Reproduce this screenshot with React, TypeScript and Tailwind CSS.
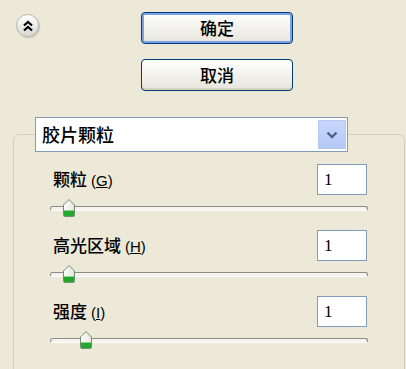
import React from "react";

const cjk = { fontFamily: '"Noto Sans CJK SC", "Noto Sans", sans-serif' };

function Thumb() {
  return (
    <svg width="12" height="18" viewBox="0 0 12 18" className="absolute top-[-9px]" style={{ left: -6 }}>
      <defs>
        <linearGradient id="tb" x1="0" y1="0" x2="1" y2="0">
          <stop offset="0" stopColor="#ffffff" />
          <stop offset="1" stopColor="#e4e4dc" />
        </linearGradient>
      </defs>
      <path d="M6 0.5 L11.5 6 L11.5 16.5 Q11.5 17.5 10.5 17.5 L1.5 17.5 Q0.5 17.5 0.5 16.5 L0.5 6 Z" fill="url(#tb)" stroke="#6f8f74" />
      <rect x="1" y="12" width="10" height="5" fill="#21a82d" />
      <rect x="1" y="11" width="10" height="1" fill="#8ad48f" />
    </svg>
  );
}

function Slider({ pos }: { pos: number }) {
  return (
    <div className="h-[26px] flex items-center pl-[36px] pr-[36px]">
      <div className="relative w-full h-[5px] rounded-[3px] bg-[#f4f3ee] border border-[#8c8c86] border-b-white">
        <div className="absolute top-[1px]" style={{ left: pos }}>
          <Thumb />
        </div>
      </div>
    </div>
  );
}

function Row({ label, hot, pos }: { label: string; hot: string; pos: number }) {
  return (
    <div className="mb-[9px]">
      <div className="h-[31px] flex items-center justify-between pl-[39px] pr-[37px]">
        <span className="text-[17px] font-medium text-black" style={cjk}>
          {label}
          <span className="ml-[4px] text-[15px]" style={{ fontFamily: '"Liberation Sans", sans-serif' }}>
            (<span className="underline">{hot}</span>)
          </span>
        </span>
        <div className="w-[50px] h-[31px] bg-white border border-[#7f9db9] flex items-center pl-[6px] text-[17px]" style={{ fontFamily: '"Liberation Serif", serif' }}>
          1
        </div>
      </div>
      <Slider pos={pos} />
    </div>
  );
}

export default function App() {
  return (
    <div className="w-[406px] h-[369px] bg-[#ece9d8] overflow-hidden" style={cjk}>
      <div className="flex pt-[12px]">
        <div className="ml-[16px] mt-[2px] w-[23px] h-[23px] rounded-full bg-gradient-to-b from-white to-[#d9d9d2] border border-[#b5b5ab] shadow-[1px_1px_1px_rgba(0,0,0,0.18)] flex items-center justify-center">
          <svg width="12" height="12" viewBox="0 0 12 12">
            <path d="M2 5.5 L6 2 L10 5.5 M2 10.5 L6 7 L10 10.5" fill="none" stroke="#000" strokeWidth="2.2" />
          </svg>
        </div>
        <div className="ml-[102px] flex flex-col gap-[15px]">
          <button className="w-[152px] h-[32px] rounded-[4px] border border-[#003c74] bg-gradient-to-b from-white to-[#e6e5dc] shadow-[inset_0_0_0_2px_#7ba2e7] text-[17px] font-medium text-black" style={cjk}>
            确定
          </button>
          <button className="w-[152px] h-[32px] rounded-[4px] border border-[#003c74] bg-gradient-to-b from-white to-[#e6e5dc] shadow-[inset_0_-2px_0_#d8d2bd] text-[17px] font-medium text-black" style={cjk}>
            取消
          </button>
        </div>
      </div>
      <fieldset className="mt-[26px] ml-[13px] w-[392px] h-[260px] border border-[#d0d0bf] rounded-[6px]">
        <legend className="ml-[21px] p-0">
          <div className="w-[313px] h-[35px] bg-white border border-[#7f9db9] flex items-center justify-between pl-[6px] pr-[1px]">
            <span className="text-[18px] font-medium text-black" style={cjk}>胶片颗粒</span>
            <div className="w-[28px] h-[29px] bg-gradient-to-b from-[#c8d7fc] to-[#b4c8f6] border border-[#b5c9f3] flex items-center justify-center">
              <svg width="12" height="8" viewBox="0 0 12 8">
                <path d="M1.5 1.5 L6 6 L10.5 1.5" fill="none" stroke="#4d6185" strokeWidth="2.4" />
              </svg>
            </div>
          </div>
        </legend>
        <div className="pt-[12px]">
          <Row label="颗粒" hot="G" pos={18} />
          <Row label="高光区域" hot="H" pos={18} />
          <Row label="强度" hot="I" pos={35} />
        </div>
      </fieldset>
    </div>
  );
}
